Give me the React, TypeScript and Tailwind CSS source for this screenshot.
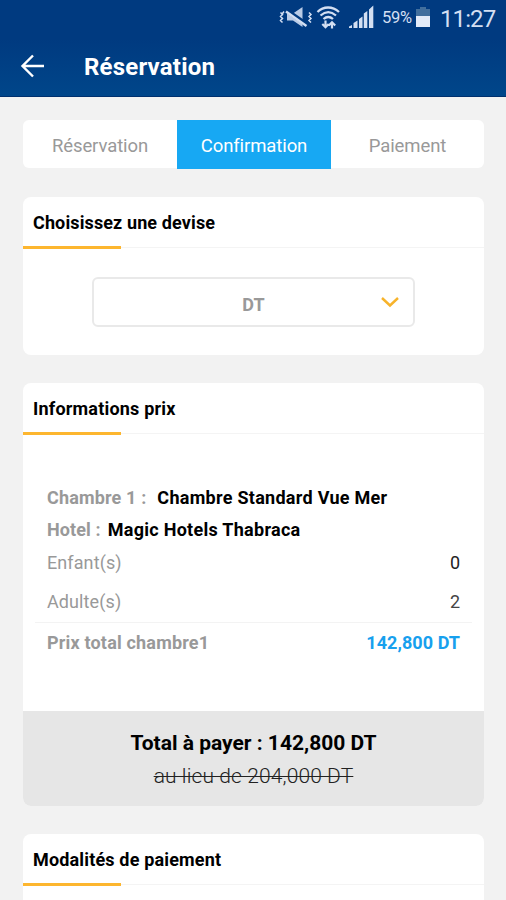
import React from "react";

function StatusIcons() {
  return (
    <svg width="98" height="28" viewBox="278 4 98 28" fill="none" stroke="#d3dff2" className="shrink-0">
      {/* muted speaker with vibration marks */}
      <path d="M280.500 12.500l2 2-2 2 2 2-2 2 2 2M284 11.500l-1.500 2M309 12.500l2 2-2 2 2 2-2 2 2 2" strokeWidth="1.500" />
      <path d="M287 13.500h6l9.500-6.500v20l-9.500-6.500h-6z" fill="#b9cbe6" stroke="none" />
      <path d="M287.500 11l20 14" stroke="#003a80" strokeWidth="4.500" />
      <path d="M286 11.500l20.500 14.500" strokeWidth="2.400" />
      {/* wifi with transfer arrows */}
      <path d="M317.500 12c6-6 15-6 21.500 0M320.500 15.500c5-4.300 10.500-4.300 15.500 0M323.500 19c3-2.600 6.500-2.600 9.500 0" strokeWidth="2.300" />
      <path d="M325.500 20.500v6.500M322.300 24l3.200 3.200 3.200-3.200M332 28.500v-6M328.800 25.500l3.200-3.200 3.200 3.200" strokeWidth="2.200" />
      {/* signal strength */}
      <g fill="#d3dff2" stroke="none">
        <path d="M349 28v-1.500l3-1.500v3zM353.500 28v-5l4-2.500V28zM359 28v-9l3.500-2.500V28zM363.800 28V13.500l3.500-2.500v17zM369 28V9.500l4.300-4V28z" />
      </g>
    </svg>
  );
}

function CardTitle({ children, className }: { children: React.ReactNode; className: string }) {
  return (
    <>
      <h2 className="h-[49px] pl-[10px] pt-[16px] leading-5 font-bold text-black">
        <span className={className}>{children}</span>
      </h2>
      <div className="h-[3px] bg-[linear-gradient(#f4f4f4,#f4f4f4)] bg-[length:100%_1px] bg-[position:0_1px] bg-no-repeat">
        <div className="h-[3px] w-[98px] bg-[#fdb62f]" />
      </div>
    </>
  );
}

export default function App() {
  return (
    <div className="h-[900px] w-[506px] overflow-hidden bg-[#f2f2f2] font-['Roboto',sans-serif] whitespace-nowrap">
      <header className="h-[97px] border-b border-[#00306e] bg-linear-to-b from-[#003a80] from-40% to-[#00468a]">
        <div className="flex h-9 items-center pl-[278px] text-[#d3dff2]">
          <StatusIcons />
          <span className="ml-[6px] w-[31px] text-[16.500px] tracking-[-0.3px]">59%</span>
          <svg width="16" height="22" viewBox="0 0 16 22" className="ml-[2px] shrink-0">
            <path d="M5 0h6v2h4v7H1V2h4z" fill="#426f9d" />
            <path d="M1 9h14v11H1z" fill="#e3ebf8" />
          </svg>
          <span className="ml-[9px] pt-px text-[24px] tracking-[-0.9px]">11:27</span>
        </div>
        <div className="flex h-[60px] items-center pl-[20px] text-white">
          <svg width="25" height="24" viewBox="0 0 25 24" fill="none" stroke="white" strokeWidth="2.400">
            <path d="M24 12H3M13 1.500L2.500 12 13 22.500" />
          </svg>
          <h1 className="ml-[39px] pt-[2px] text-[24px] font-bold tracking-[0.2px]">Réservation</h1>
        </div>
      </header>

      <main className="pr-[22px] pl-[23px] pt-[23px]">
        <nav className="flex h-[49px] text-[18.500px] leading-[52px] tracking-[-0.1px] text-[#999]">
          <div className="h-12 w-[154px] rounded-l-md bg-white text-center">Réservation</div>
          <div className="w-[154px] bg-[#17a8f3] text-center text-white">Confirmation</div>
          <div className="h-12 w-[153px] rounded-r-md bg-white text-center">Paiement</div>
        </nav>

        <section className="mt-[28px] h-[158px] rounded-lg bg-white">
          <CardTitle className="text-[18px] tracking-[0.12px]">Choisissez une devise</CardTitle>
          <div className="mt-[28px] ml-[69px] flex h-[50px] w-[323px] items-center rounded-md border-2 border-[#e9e9e9] pt-[4px]">
            <span className="w-full pl-[32px] text-center text-[18px] font-bold text-[#999]">DT</span>
            <svg width="18" height="12" viewBox="0 0 18 12" fill="none" stroke="#f7b32b" strokeWidth="2.400" className="-mt-[5px] mr-[14px] shrink-0">
              <path d="M1 2l8 7.500L17 2" />
            </svg>
          </div>
        </section>

        <section className="mt-[28px] h-[423px] overflow-hidden rounded-lg bg-white">
          <CardTitle className="text-[18px] tracking-[0.2px]">Informations prix</CardTitle>
          <div className="mt-[46px] h-[230px] px-6 text-[18px] text-[#999]">
            <p className="flex h-[32px] items-center font-bold">
              <span className="tracking-[0.15px]">Chambre 1 :</span>
              <span className="ml-[11px] tracking-[0.28px] text-black">Chambre Standard Vue Mer</span>
            </p>
            <p className="flex h-[32px] items-center font-bold">
              <span className="tracking-[0.1px]">Hotel :</span>
              <span className="ml-[7px] tracking-[0.28px] text-black">Magic Hotels Thabraca</span>
            </p>
            <p className="flex h-[34px] items-center justify-between">
              <span className="tracking-[0.1px]">Enfant(s)</span>
              <span className="text-[#222]">0</span>
            </p>
            <p className="flex h-[44px] items-center justify-between">
              <span className="tracking-[0.1px]">Adulte(s)</span>
              <span className="text-[#444]">2</span>
            </p>
            <div className="-mx-3 -mt-px h-px bg-[#f3f3f3]" />
            <p className="flex h-[39px] items-center justify-between font-bold">
              <span className="tracking-[0.18px]">Prix total chambre1</span>
              <span className="tracking-[0.05px] text-[#17a0ee]">142,800 DT</span>
            </p>
          </div>
          <footer className="h-[95px] bg-[#e6e6e6] pt-[16px] text-center text-black">
            <p className="h-[33px] text-[21px] leading-[33px] font-bold">Total à payer : 142,800 DT</p>
            <p className="h-[33px] text-[21px] leading-[33px] font-light tracking-[0.1px] text-[#222] line-through decoration-1">au lieu de 204,000 DT</p>
          </footer>
        </section>

        <section className="mt-[28px] h-[100px] rounded-t-lg bg-white">
          <CardTitle className="text-[18px] tracking-[0.16px]">Modalités de paiement</CardTitle>
        </section>
      </main>
    </div>
  );
}
